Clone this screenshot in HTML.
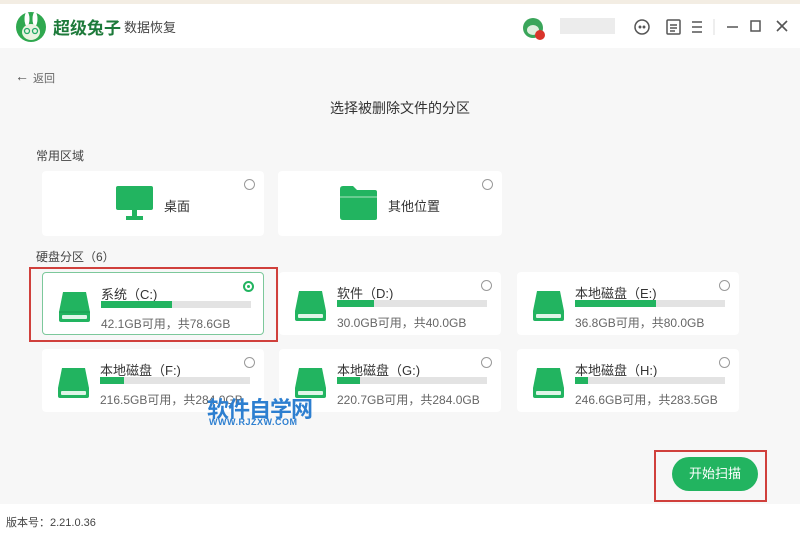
<!DOCTYPE html>
<html><head><meta charset="utf-8"><style>
*{margin:0;padding:0;box-sizing:border-box}
body{width:800px;height:536px;overflow:hidden;background:#f7f7f7;font-family:"Liberation Sans","Noto Sans CJK SC",sans-serif;color:#333;position:relative}
.abs{position:absolute}
.card{position:absolute;background:#fff;border-radius:4px;width:222px;height:63px}
.radio{position:absolute;right:9px;top:8px;width:11px;height:11px;border:1px solid #999;border-radius:50%}
.name{position:absolute;left:58px;top:11px;font-size:13px;color:#333}
.bar{position:absolute;left:58px;top:28px;width:150px;height:7px;background:#e3e3e3}
.bar i{display:block;height:7px;background:#22b460}
.size{position:absolute;left:58px;top:42px;font-size:12px;color:#666}
.disk{position:absolute;left:15px;top:17px}
</style></head><body>
<div class="abs" style="left:0;top:0;width:800px;height:4px;background:#f3ede3"></div>
<div class="abs" style="left:0;top:4px;width:800px;height:44px;background:#fff"></div>
<svg class="abs" style="left:15px;top:11px" width="32" height="32" viewBox="0 0 32 32"><circle cx="16" cy="16" r="15" fill="#2fa84f"/><ellipse cx="12" cy="8" rx="2.5" ry="7" fill="#fff"/><ellipse cx="20" cy="8" rx="2.5" ry="7" fill="#fff"/><ellipse cx="16" cy="21" rx="9" ry="8" fill="#e9f3e0"/><circle cx="12" cy="20" r="2.5" fill="none" stroke="#2a6" stroke-width="1.3"/><circle cx="20" cy="20" r="2.5" fill="none" stroke="#2a6" stroke-width="1.3"/></svg>
<div class="abs" style="left:53px;top:14px;font-size:17px;font-weight:bold;color:#1d7a3a">超级兔子</div>
<div class="abs" style="left:124px;top:17px;font-size:13px;color:#444">数据恢复</div>
<svg class="abs" style="left:521px;top:16px" width="26" height="26"><circle cx="12" cy="12" r="10" fill="#3aa55a"/><ellipse cx="12" cy="14" rx="6" ry="5" fill="#dfeede"/><circle cx="19" cy="19" r="5" fill="#d9342b"/></svg>
<div class="abs" style="left:560px;top:18px;width:55px;height:16px;background:#ececec"></div>
<svg class="abs" style="left:632px;top:16px" width="130" height="22" fill="none" stroke="#555" stroke-width="1.5">
<circle cx="10" cy="11" r="7"/><circle cx="8" cy="11" r=".7" fill="#555"/><circle cx="12" cy="11" r=".7" fill="#555"/>
<rect x="35" y="4" width="13" height="14" rx="1"/><path d="M38 9h7M38 12h7M38 15h5"/>
<path d="M60 6h10M60 11h10M60 16h10"/>
<path d="M82 3v16" stroke="#ddd" stroke-width="1"/>
<path d="M95 11h11"/><rect x="119" y="5" width="9" height="10" transform="translate(0,0)"/>
</svg>
<svg class="abs" style="left:775px;top:19px" width="14" height="14" stroke="#555" stroke-width="1.6"><path d="M2 2l10 10M12 2L2 12"/></svg>
<div class="abs" style="left:15px;top:68px;font-size:14px;color:#555">←</div>
<div class="abs" style="left:33px;top:70px;font-size:11px;color:#666">返回</div>
<div class="abs" style="left:0;width:800px;top:98px;text-align:center;font-size:14px;color:#333">选择被删除文件的分区</div>
<div class="abs" style="left:36px;top:147px;font-size:12px;color:#444">常用区域</div>
<div class="card" style="left:42px;top:171px;height:65px"><div class="radio"></div>
<svg class="abs" style="left:74px;top:15px" width="38" height="36"><rect x="0" y="0" width="37" height="24" rx="2" fill="#22b460"/><rect x="16" y="24" width="5" height="6" fill="#22b460"/><rect x="10" y="30" width="17" height="4" fill="#22b460"/></svg>
<div class="abs" style="left:122px;top:25px;font-size:13px">桌面</div></div>
<div class="card" style="left:278px;top:171px;height:65px;width:224px"><div class="radio"></div>
<svg class="abs" style="left:62px;top:14px" width="38" height="36"><path d="M0 4q0-3 3-3h10l4 4h18q2 0 2 2v26q0 2-2 2H3q-3 0-3-3z" fill="#22b460"/><path d="M0 12h37" stroke="#7fd3a0" stroke-width="1.5"/></svg>
<div class="abs" style="left:110px;top:25px;font-size:13px">其他位置</div></div>
<div class="abs" style="left:36px;top:248px;font-size:12px;color:#444">硬盘分区（6）</div>

<div class="abs" style="left:29px;top:267px;width:249px;height:75px;border:2px solid #d0403c"></div>
<div class="card" style="left:42px;top:272px;border:1px solid #7cc89b"><div class="radio" style="border:2px solid #22b460"><i style="position:absolute;left:2px;top:2px;width:3px;height:3px;border-radius:50%;background:#22b460"></i></div><svg class="disk" width="33" height="33"><path d="M5 2h23l4 20v8q0 2-2 2H3q-2 0-2-2v-8z" fill="#22b460"/><path d="M1 22h31" stroke="#1a9a50"/><rect x="4" y="25" width="25" height="4" rx="1" fill="#e0f5e8"/></svg><div class="name">系统（C:)</div><div class="bar"><i style="width:71px"></i></div><div class="size">42.1GB可用，共78.6GB</div></div>

<div class="card" style="left:279px;top:272px"><div class="radio"></div><svg class="disk" width="33" height="33"><path d="M5 2h23l4 20v8q0 2-2 2H3q-2 0-2-2v-8z" fill="#22b460"/><rect x="4" y="25" width="25" height="4" rx="1" fill="#e0f5e8"/></svg><div class="name">软件（D:)</div><div class="bar"><i style="width:37px"></i></div><div class="size">30.0GB可用，共40.0GB</div></div>

<div class="card" style="left:517px;top:272px"><div class="radio"></div><svg class="disk" width="33" height="33"><path d="M5 2h23l4 20v8q0 2-2 2H3q-2 0-2-2v-8z" fill="#22b460"/><rect x="4" y="25" width="25" height="4" rx="1" fill="#e0f5e8"/></svg><div class="name">本地磁盘（E:)</div><div class="bar"><i style="width:81px"></i></div><div class="size">36.8GB可用，共80.0GB</div></div>

<div class="card" style="left:42px;top:349px"><div class="radio"></div><svg class="disk" width="33" height="33"><path d="M5 2h23l4 20v8q0 2-2 2H3q-2 0-2-2v-8z" fill="#22b460"/><rect x="4" y="25" width="25" height="4" rx="1" fill="#e0f5e8"/></svg><div class="name">本地磁盘（F:)</div><div class="bar"><i style="width:24px"></i></div><div class="size">216.5GB可用，共284.0GB</div></div>

<div class="card" style="left:279px;top:349px"><div class="radio"></div><svg class="disk" width="33" height="33"><path d="M5 2h23l4 20v8q0 2-2 2H3q-2 0-2-2v-8z" fill="#22b460"/><rect x="4" y="25" width="25" height="4" rx="1" fill="#e0f5e8"/></svg><div class="name">本地磁盘（G:)</div><div class="bar"><i style="width:23px"></i></div><div class="size">220.7GB可用，共284.0GB</div></div>

<div class="card" style="left:517px;top:349px"><div class="radio"></div><svg class="disk" width="33" height="33"><path d="M5 2h23l4 20v8q0 2-2 2H3q-2 0-2-2v-8z" fill="#22b460"/><rect x="4" y="25" width="25" height="4" rx="1" fill="#e0f5e8"/></svg><div class="name">本地磁盘（H:)</div><div class="bar"><i style="width:13px"></i></div><div class="size">246.6GB可用，共283.5GB</div></div>

<div class="abs" style="left:207px;top:392px;font-size:22px;font-weight:bold;color:#2d7fd0;letter-spacing:-1px">软件自学网</div>
<div class="abs" style="left:209px;top:417px;font-size:9px;font-weight:bold;color:#2d7fd0;letter-spacing:.5px">WWW.RJZXW.COM</div>

<div class="abs" style="left:654px;top:450px;width:113px;height:52px;border:2px solid #d0403c"></div>
<div class="abs" style="left:672px;top:457px;width:86px;height:34px;border-radius:17px;background:#22b460;color:#fff;font-size:13px;text-align:center;line-height:34px">开始扫描</div>
<div class="abs" style="left:0;top:504px;width:800px;height:32px;background:#fff"></div>
<div class="abs" style="left:6px;top:514px;font-size:11px;color:#444">版本号：2.21.0.36</div>
</body></html>
